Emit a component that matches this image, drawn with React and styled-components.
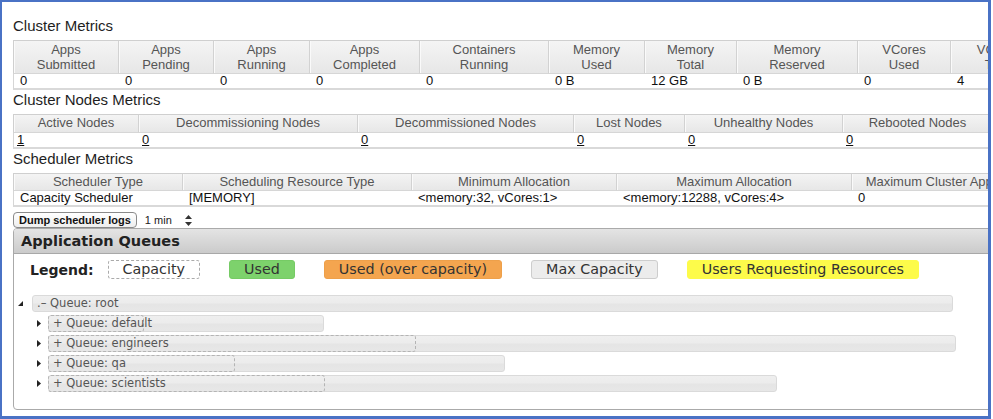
import React from "react";
import styled, { createGlobalStyle } from "styled-components";

const GlobalStyle = createGlobalStyle`
  body {
    margin: 0;
    background: #fff;
    font-family: "Liberation Sans", Arial, sans-serif;
  }
`;

const clusterHeads = [
  ["Apps\nSubmitted", 106],
  ["Apps\nPending", 95],
  ["Apps\nRunning", 96],
  ["Apps\nCompleted", 110],
  ["Containers\nRunning", 129],
  ["Memory\nUsed", 96],
  ["Memory\nTotal", 92],
  ["Memory\nReserved", 121],
  ["VCores\nUsed", 93],
  ["VCores\nTotal", 96],
  ["VCores\nReserved", 110],
];
const clusterValues = ["0", "0", "0", "0", "0", "0 B", "12 GB", "0 B", "0", "4", "0"];

const nodeHeads = [
  ["Active Nodes", 126],
  ["Decommissioning Nodes", 219],
  ["Decommissioned Nodes", 216],
  ["Lost Nodes", 111],
  ["Unhealthy Nodes", 158],
  ["Rebooted Nodes", 150],
];
const nodeValues = ["1", "0", "0", "0", "0", "0"];

const schedulerHeads = [
  ["Scheduler Type", 170],
  ["Scheduling Resource Type", 229],
  ["Minimum Allocation", 205],
  ["Maximum Allocation", 235],
  ["Maximum Cluster Application Priority", 240],
];
const schedulerValues = [
  "Capacity Scheduler",
  "[MEMORY]",
  "<memory:32, vCores:1>",
  "<memory:12288, vCores:4>",
  "0",
];

const legend = [
  { label: "Capacity", variant: "capacity" },
  { label: "Used", variant: "used" },
  { label: "Used (over capacity)", variant: "over" },
  { label: "Max Capacity", variant: "max" },
  { label: "Users Requesting Resources", variant: "users" },
];

// widths in px of the max-capacity bar and the dashed capacity mark
const queues = [
  { name: "default", max: 276, capacity: 94 },
  { name: "engineers", max: 908, capacity: 366 },
  { name: "qa", max: 457, capacity: 185 },
  { name: "scientists", max: 729, capacity: 275 },
];

export default function App() {
  return (
    <>
      <GlobalStyle />
      <Frame>
        <Page>
          <SectionTitle>Cluster Metrics</SectionTitle>
          <MetricsTable heads={clusterHeads} values={clusterValues} tall />

          <SectionTitle $gap>Cluster Nodes Metrics</SectionTitle>
          <MetricsTable heads={nodeHeads} values={nodeValues} linked />

          <SectionTitle $gap>Scheduler Metrics</SectionTitle>
          <MetricsTable heads={schedulerHeads} values={schedulerValues} />

          <ActionRow>
            <DumpButton type="button">Dump scheduler logs</DumpButton>
            <IntervalPicker>
              1 min
              <svg width="7" height="11" viewBox="0 0 7 11">
                <path d="M3.5 0 L7 4 L0 4 Z M3.5 11 L7 7 L0 7 Z" fill="#333" />
              </svg>
            </IntervalPicker>
          </ActionRow>

          <Panel>
            <PanelHeader>Application Queues</PanelHeader>
            <PanelBody>
              <LegendRow>
                <LegendLabel>Legend:</LegendLabel>
                {legend.map((item) => (
                  <LegendSwatch key={item.label} $variant={item.variant}>
                    {item.label}
                  </LegendSwatch>
                ))}
              </LegendRow>

              <Tree>
                <TreeRow>
                  <Toggle>
                    <svg width="5" height="5" viewBox="0 0 5 5">
                      <path d="M0 5 L5 5 L5 0 Z" fill="#222" />
                    </svg>
                  </Toggle>
                  <QueueBar $width={921}>
                    <QueueLabel>.– Queue: root</QueueLabel>
                  </QueueBar>
                </TreeRow>
                {queues.map((q) => (
                  <TreeRow key={q.name} $child>
                    <Toggle $closed>
                      <svg width="4" height="7" viewBox="0 0 4 7">
                        <path d="M0 0 L4 3.5 L0 7 Z" fill="#222" />
                      </svg>
                    </Toggle>
                    <QueueBar $width={q.max}>
                      <CapacityMark $width={q.capacity} />
                      <QueueLabel>+ Queue: {q.name}</QueueLabel>
                    </QueueBar>
                  </TreeRow>
                ))}
              </Tree>
            </PanelBody>
          </Panel>
        </Page>
      </Frame>
    </>
  );
}

function MetricsTable({ heads, values, linked, tall }) {
  const total = heads.reduce((sum, [, w]) => sum + w, 0);
  return (
    <Table $width={total}>
      <colgroup>
        {heads.map(([label, w]) => (
          <col key={label} style={{ width: w }} />
        ))}
      </colgroup>
      <thead>
        <tr>
          {heads.map(([label]) => (
            <HeadCell key={label} $tall={tall}>
              {label}
            </HeadCell>
          ))}
        </tr>
      </thead>
      <tbody>
        <tr>
          {values.map((v, i) => (
            <DataCell key={i} $tight={linked}>
              {linked ? <NodeLink href="#">{v}</NodeLink> : v}
            </DataCell>
          ))}
        </tr>
      </tbody>
    </Table>
  );
}

const Frame = styled.div`
  width: 991px;
  height: 419px;
  box-sizing: border-box;
  border: 2px solid #4a72c5;
  border-right-width: 3px;
  border-bottom-width: 3px;
  overflow: hidden;
`;

const Page = styled.div`
  width: 1200px;
  padding: 15px 0 0 11px;
`;

const SectionTitle = styled.h3`
  margin: ${({ $gap }) => ($gap ? "1px" : "0")} 0 5px;
  font-size: 15px;
  line-height: 18px;
  font-weight: normal;
  color: #1e1e1e;
`;

const Table = styled.table`
  width: ${({ $width }) => $width}px;
  table-layout: fixed;
  border-collapse: separate;
  border-spacing: 0;
  font-size: 13px;
`;

const HeadCell = styled.th`
  padding: ${({ $tall }) => ($tall ? "2px 4px 1px" : "1px 4px")};
  line-height: 14.5px;
  font-weight: normal;
  color: #555;
  text-align: center;
  white-space: pre-line;
  overflow: hidden;
  background: linear-gradient(#f4f4f4, #e7e7e7);
  border-top: 1px solid #cfcfcf;
  border-bottom: 1px solid #d6d6d6;
  border-right: 1px solid #d2d2d2;
  box-shadow: inset 1px 0 0 #fafafa;

  &:first-child {
    border-left: 1px solid #cfcfcf;
  }
`;

const DataCell = styled.td`
  padding: 0 0 0 ${({ $tight }) => ($tight ? "3px" : "6px")};
  line-height: 14px;
  color: #111;
  white-space: nowrap;
  overflow: hidden;
  border-bottom: 2px solid #d9d9d9;

  &:first-child {
    border-left: 1px solid #d6d6d6;
  }
`;

const NodeLink = styled.a`
  color: #111;
  text-decoration: underline;
`;

const ActionRow = styled.div`
  display: flex;
  align-items: center;
  gap: 8px;
  margin-top: 5px;
`;

const DumpButton = styled.button`
  height: 16px;
  padding: 0 5px;
  border: 1px solid #8a8a8a;
  border-radius: 4px;
  background: linear-gradient(#ffffff, #eeeeee);
  font-family: "Liberation Sans", Arial, sans-serif;
  font-size: 11px;
  font-weight: bold;
  line-height: 14px;
  color: #111;
`;

const IntervalPicker = styled.span`
  display: flex;
  align-items: center;
  gap: 13px;
  font-size: 11px;
  color: #222;
`;

const Panel = styled.section`
  width: 1100px;
  border: 1px solid #aaa;
  border-radius: 4px;
  overflow: hidden;
`;

const PanelHeader = styled.h2`
  margin: 0;
  height: 24px;
  padding-left: 7px;
  background: linear-gradient(#e4e4e4, #cbcbcb);
  border-bottom: 1px solid #a8a8a8;
  font-family: "DejaVu Sans", Verdana, sans-serif;
  font-size: 14.5px;
  font-weight: bold;
  line-height: 25px;
  color: #222;
`;

const PanelBody = styled.div`
  padding: 6px 0 14px 3px;
  font-family: "DejaVu Sans", Verdana, sans-serif;
`;

const LegendRow = styled.div`
  display: flex;
  align-items: center;
  gap: 29px;
  height: 19px;
  padding-left: 13px;
`;

const LegendLabel = styled.span`
  margin-right: -15px;
  font-size: 14px;
  font-weight: bold;
  color: #222;
`;

const swatches = {
  capacity: "background: #fff; border: 1px dashed #aaa;",
  used: "background: #7dd26c; border: 1px solid #76cb65;",
  over: "background: #f4a54f; border: 1px solid #eea04a;",
  max: "background: #ececec; border: 1px solid #cdcdcd;",
  users: "background: #fdfb4a; border: 1px solid #fdfb4a;",
};

const LegendSwatch = styled.span`
  box-sizing: border-box;
  height: 19px;
  padding: 0 14px;
  border-radius: 3px;
  font-size: 14.3px;
  line-height: 17px;
  color: #333;
  ${({ $variant }) => swatches[$variant]}
`;

const Tree = styled.ul`
  list-style: none;
  margin: 16px 0 0 0;
  padding: 0;
`;

const TreeRow = styled.li`
  display: flex;
  align-items: center;
  height: 16px;
  margin-bottom: 4px;
  margin-left: ${({ $child }) => ($child ? "16px" : "0")};
`;

const Toggle = styled.span`
  display: flex;
  align-items: center;
  width: 15px;
  padding-left: ${({ $closed }) => ($closed ? "4px" : "1px")};
  box-sizing: border-box;
`;

const QueueBar = styled.div`
  position: relative;
  box-sizing: border-box;
  width: ${({ $width }) => $width}px;
  height: 17px;
  border: 1px solid #dadada;
  border-radius: 3px;
  background: linear-gradient(#efefef 0%, #ececec 45%, #e5e5e5 55%, #e7e7e7 100%);
  display: flex;
  align-items: center;
`;

const CapacityMark = styled.span`
  position: absolute;
  left: -1px;
  top: -1px;
  bottom: -1px;
  width: ${({ $width }) => $width}px;
  border: 1px dashed #b4b4b4;
  border-radius: 3px;
`;

const QueueLabel = styled.span`
  position: relative;
  padding-left: 4px;
  font-size: 11.5px;
  color: #555;
  white-space: nowrap;
`;
